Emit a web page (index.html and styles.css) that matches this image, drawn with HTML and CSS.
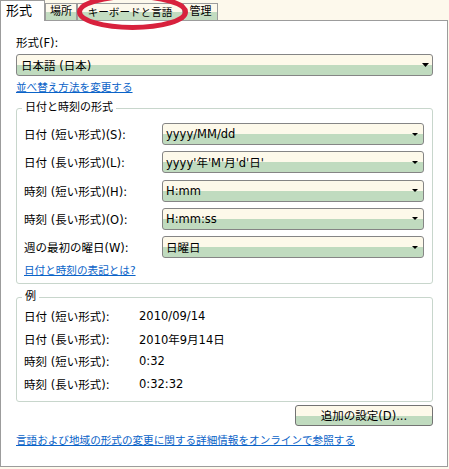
FILE: index.html
```html
<!DOCTYPE html>
<html lang="ja">
<head>
<meta charset="utf-8">
<title>地域と言語</title>
<link rel="stylesheet" href="styles.css">
</head>
<body>
<div class="dialog">
  <div class="tabs">
    <div class="tab active">形式</div>
    <div class="tab t-place">場所</div>
    <div class="tab t-kbd">キーボードと言語</div>
    <div class="tab t-admin">管理</div>
  </div>
  <div class="panel">
    <div class="label">形式(F):</div>
    <div class="combo main"><span>日本語 (日本)</span><svg class="arrow big" width="7" height="4" viewBox="0 0 7 4"><polygon points="0,0 7,0 3.5,4" fill="#000"/></svg></div>
    <a class="link" href="#">並べ替え方法を変更する</a>

    <fieldset class="group g1">
      <legend>日付と時刻の形式</legend>
      <div class="rows">
        <div class="row"><span>日付 (短い形式)(S):</span><div class="combo"><span>yyyy/MM/dd</span><svg class="arrow" width="6" height="3" viewBox="0 0 6 3"><polygon points="0,0 6,0 3,3" fill="#000"/></svg></div></div>
        <div class="row"><span>日付 (長い形式)(L):</span><div class="combo"><span>yyyy'年'M'月'd'日'</span><svg class="arrow" width="6" height="3" viewBox="0 0 6 3"><polygon points="0,0 6,0 3,3" fill="#000"/></svg></div></div>
        <div class="row"><span>時刻 (短い形式)(H):</span><div class="combo"><span>H:mm</span><svg class="arrow" width="6" height="3" viewBox="0 0 6 3"><polygon points="0,0 6,0 3,3" fill="#000"/></svg></div></div>
        <div class="row"><span>時刻 (長い形式)(O):</span><div class="combo"><span>H:mm:ss</span><svg class="arrow" width="6" height="3" viewBox="0 0 6 3"><polygon points="0,0 6,0 3,3" fill="#000"/></svg></div></div>
        <div class="row"><span>週の最初の曜日(W):</span><div class="combo"><span>日曜日</span><svg class="arrow" width="6" height="3" viewBox="0 0 6 3"><polygon points="0,0 6,0 3,3" fill="#000"/></svg></div></div>
      </div>
      <a class="link" href="#">日付と時刻の表記とは?</a>
    </fieldset>

    <fieldset class="group g2">
      <legend>例</legend>
      <div class="examples">
        <span>日付 (短い形式):</span><span>2010/09/14</span>
        <span>日付 (長い形式):</span><span>2010年9月14日</span>
        <span>時刻 (短い形式):</span><span>0:32</span>
        <span>時刻 (長い形式):</span><span>0:32:32</span>
      </div>
    </fieldset>

    <div class="btnrow"><button class="btn" type="button">追加の設定(D)...</button></div>
    <a class="link bottom" href="#">言語および地域の形式の変更に関する詳細情報をオンラインで参照する</a>
  </div>
  <svg class="mark" width="449" height="40" viewBox="0 0 449 40"><ellipse cx="132.5" cy="12" rx="53" ry="15.5" fill="none" stroke="#d8213d" stroke-width="5"/></svg>
</div>
</body>
</html>
```
FILE: styles.css
```css
html, body {
  margin: 0;
  padding: 0;
}
body {
  background: #fdf9ec;
  font-family: "DejaVu Sans", "Noto Sans CJK JP", sans-serif;
  font-size: 11.5px;
  color: #000;
}
.dialog {
  position: relative;
  width: 449px;
  height: 469px;
  overflow: hidden;
}
.tabs {
  display: flex;
  align-items: flex-end;
  height: 20px;
  position: relative;
  z-index: 1;
}
.tab {
  box-sizing: border-box;
  height: 17px;
  border: 1px solid #9c9c9c;
  border-bottom: none;
  background: linear-gradient(#fdf9ec 50%, #c3dcc1 50%);
  font-size: 11px;
  line-height: 16px;
  text-align: center;
  white-space: nowrap;
}
.tab.active {
  width: 45px;
  height: 21px;
  margin-bottom: -1px;
  background: #fff;
  font-size: 13px;
  line-height: 19px;
  text-align: left;
  padding-left: 5px;
}
.t-place { width: 32px; }
.t-kbd { width: 106px; font-size: 10.6px; }
.t-admin { width: 35px; }

.panel {
  box-sizing: border-box;
  width: 448px;
  height: 447px;
  border: 1px solid #9c9c9c;
  background: #fff;
  padding: 14px 14px 0 15px;
  display: flex;
  flex-direction: column;
}
.label {
  line-height: 16px;
  height: 16px;
}
.combo {
  box-sizing: border-box;
  height: 22px;
  border: 1px solid #858585;
  border-radius: 3px;
  background: linear-gradient(#fdf9ea 50%, #c0dbbf 50%);
  display: flex;
  align-items: center;
  justify-content: space-between;
  padding: 0 5px 0 3px;
  white-space: nowrap;
}
.combo.main {
  margin-top: 3px;
  padding: 0 3px 0 4px;
}
.arrow {
  display: block;
  flex: none;
}
.link {
  align-self: flex-start;
  color: #0a63c8;
  text-decoration: underline;
  font-size: 10.6px;
  line-height: 16px;
  margin-top: 3px;
  white-space: nowrap;
}
.group {
  margin: 5px 0 0;
  padding: 0 8px 5px 7px;
  border: 1px solid #c8d6cc;
  border-radius: 3px;
  min-width: 0;
}
.group legend {
  margin-left: -2px;
  padding: 0 3px;
  line-height: 16px;
  font-size: 11px;
}
.rows {
  display: flex;
  flex-direction: column;
  gap: 6.25px;
  padding-top: 7px;
}
.row {
  display: grid;
  grid-template-columns: 138px 1fr;
  align-items: center;
  height: 22px;
  white-space: nowrap;
}
.g1 .link {
  display: inline-block;
  margin-top: 4px;
}
.examples {
  display: grid;
  grid-template-columns: 115px 1fr;
  grid-auto-rows: 22.6px;
  align-items: center;
  white-space: nowrap;
  padding-bottom: 1px;
}
.btnrow {
  display: flex;
  justify-content: flex-end;
  margin-top: 3px;
}
.btn {
  box-sizing: border-box;
  width: 138px;
  height: 21px;
  border: 1px solid #737373;
  border-radius: 3px;
  background: linear-gradient(#fdf9ea 50%, #c0dbbf 50%);
  font: inherit;
  color: #000;
  padding: 0;
  line-height: 18px;
}
.link.bottom {
  margin-top: 6px;
}
.mark {
  position: absolute;
  left: 0;
  top: 0;
  z-index: 2;
  pointer-events: none;
}
```
